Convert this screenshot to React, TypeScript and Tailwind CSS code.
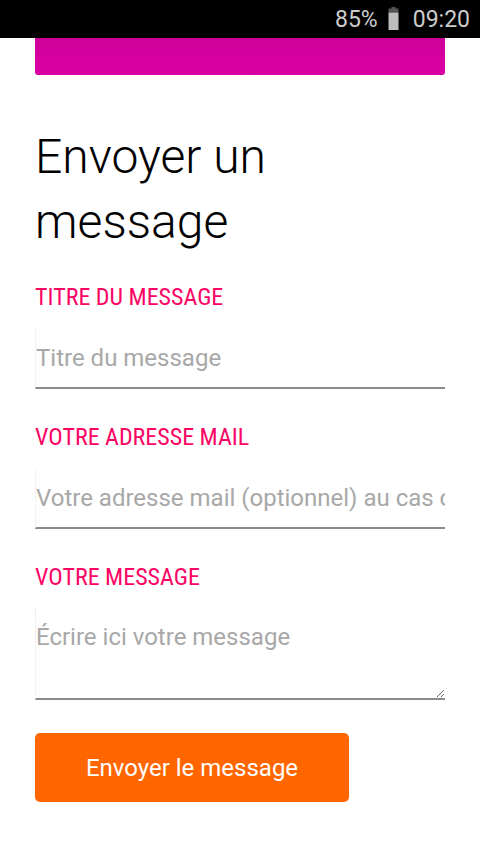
import React from "react";

function Battery() {
  return (
    <svg width="11" height="24" viewBox="0 0 11 24" className="block">
      <rect x="3.5" y="0" width="4" height="2" fill="#555555" />
      <rect x="0.5" y="1.5" width="10" height="4" fill="#555555" />
      <rect x="0.5" y="5.5" width="10" height="17.5" fill="#bdbdbd" />
    </svg>
  );
}

function Label({ children }: { children: React.ReactNode }) {
  return (
    <div className="text-[24px] leading-[28px] text-[#fb0565] uppercase whitespace-nowrap [font-family:'Roboto_Condensed',Roboto,sans-serif] [font-stretch:condensed]">
      {children}
    </div>
  );
}

export default function App() {
  return (
    <div className="min-h-[854px] w-[480px] bg-white [font-family:Roboto,'Noto_Sans',sans-serif]">
      <div className="h-[38px] bg-black flex items-center justify-end pr-[10px] text-[23px] leading-none text-[#cccccc]">
        <span>85%</span>
        <span className="ml-[10px] mr-[14px]">
          <Battery />
        </span>
        <span>09:20</span>
      </div>
      <div className="px-[35px]">
        <div className="h-[37px] rounded-b-[3px] bg-gradient-to-b from-[#cf009a] to-[#da00a2]" />
        <h1 className="mt-[49px] text-[48px] leading-[65px] font-light text-black">
          Envoyer un message
        </h1>

        <div className="mt-[29px]">
          <Label>Titre du message</Label>
        </div>
        <input
          className="mt-[17px] block w-full h-[61px] border-0 border-b-2 border-b-[#8c8c8c] border-l border-l-[#e4e4e4] border-dotted [border-bottom-style:solid] bg-transparent p-0 text-[24px] text-black placeholder:text-[#a8a8a8] outline-none"
          placeholder="Titre du message"
        />

        <div className="mt-[34px]">
          <Label>Votre adresse mail</Label>
        </div>
        <input
          className="mt-[17px] block w-full h-[61px] border-0 border-b-2 border-b-[#8c8c8c] border-l border-l-[#e4e4e4] border-dotted [border-bottom-style:solid] bg-transparent p-0 text-[24px] text-black placeholder:text-[#a8a8a8] outline-none"
          placeholder="Votre adresse mail (optionnel) au cas où nous devrions vous répondre"
        />

        <div className="mt-[34px]">
          <Label>Votre message</Label>
        </div>
        <textarea
          className="mt-[17px] block w-full h-[92px] border-0 border-b-2 border-b-[#8c8c8c] border-l border-l-[#e4e4e4] border-dotted [border-bottom-style:solid] bg-transparent px-0 pt-[15px] pb-0 text-[24px] leading-[28px] text-black placeholder:text-[#a8a8a8] outline-none resize-y"
          placeholder="Écrire ici votre message"
        />

        <button className="mt-[33px] block w-[314px] h-[69px] rounded-[5px] bg-[#ff6600] text-white text-[24px]">
          Envoyer le message
        </button>
      </div>
    </div>
  );
}
